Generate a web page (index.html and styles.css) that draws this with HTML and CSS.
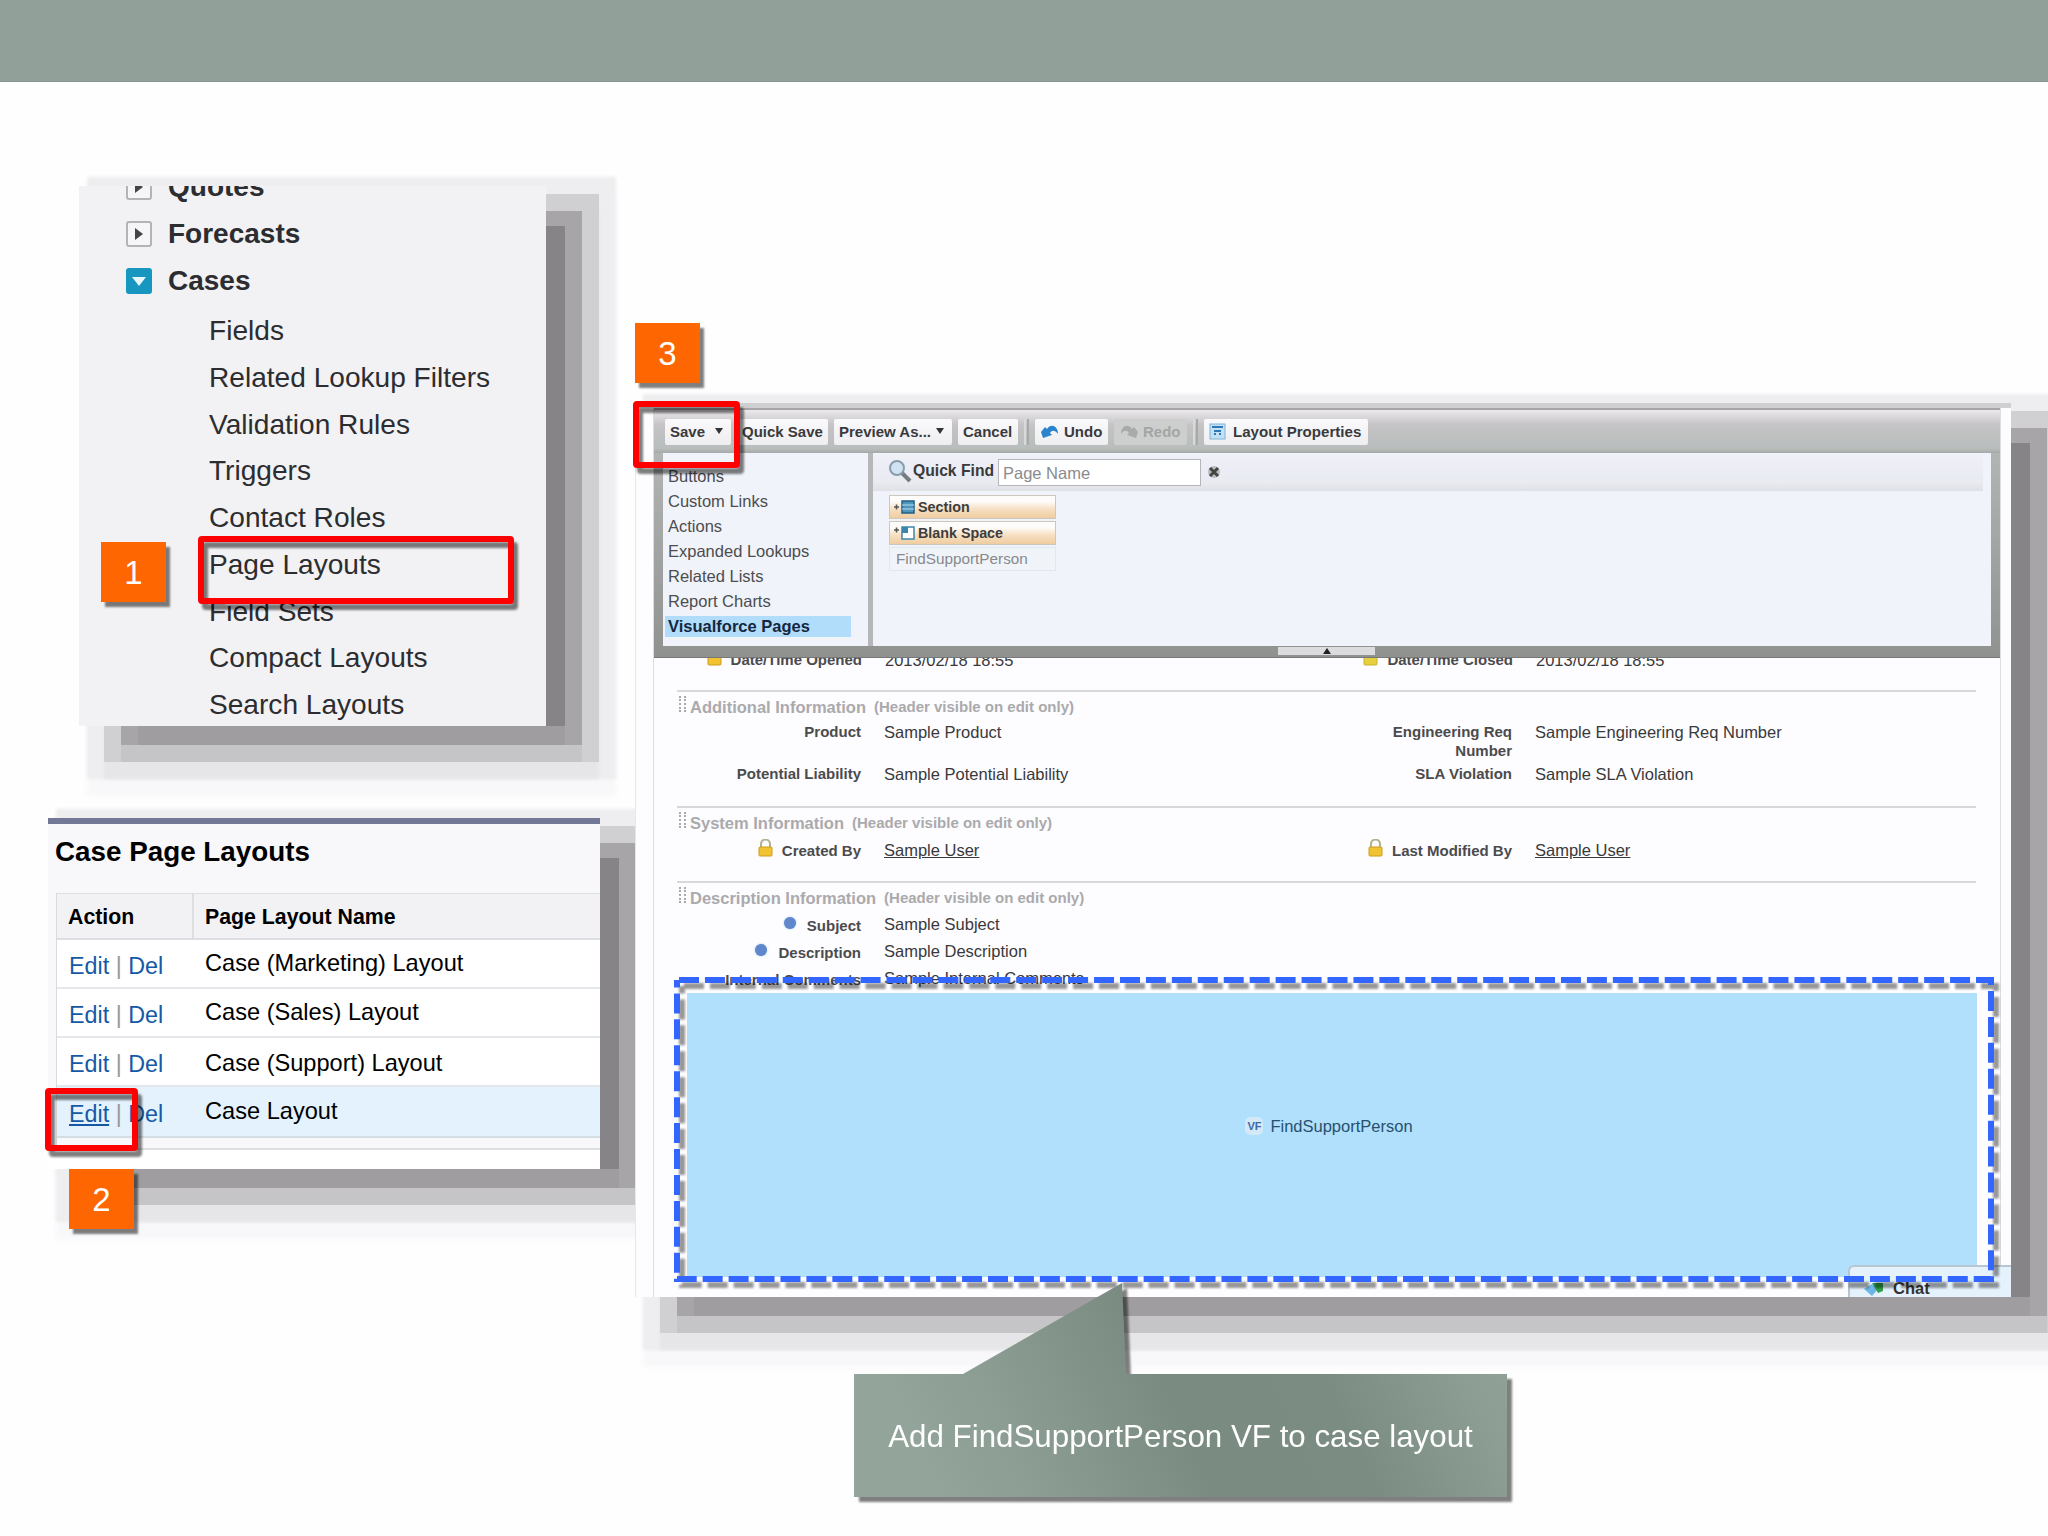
FILE: index.html
```html
<!DOCTYPE html>
<html lang="en">
<head>
    <meta charset="UTF-8">
    <meta name="viewport" content="width=device-width, initial-scale=1.0">
    <title>Case Layout Setup</title>
    <link rel="stylesheet" href="styles.css">
</head>
<body>
    <div class="slide">
        <div class="topbar"></div>
        <div class="board">
            <div class="left">
                <div class="panel tree">
                    <div class="tree-list">
                        <div class="node"><svg class="toggle" viewBox="0 0 26 26"><rect x="1" y="1" width="24" height="24" rx="2" fill="#f6f5f7" stroke="#b4b3b5" stroke-width="2"/><path d="M9 7v12l8-6z" fill="#444"/></svg>Quotes</div>
                        <div class="node"><svg class="toggle" viewBox="0 0 26 26"><rect x="1" y="1" width="24" height="24" rx="2" fill="#f6f5f7" stroke="#b4b3b5" stroke-width="2"/><path d="M9 7v12l8-6z" fill="#444"/></svg>Forecasts</div>
                        <div class="node"><svg class="toggle" viewBox="0 0 26 26"><rect width="26" height="26" rx="3" fill="#1797c0"/><path d="M6 9h14l-7 9z" fill="#e6f8fd"/></svg>Cases</div>
                        <div class="leaves">
                            <div class="leaf">Fields</div>
                            <div class="leaf">Related Lookup Filters</div>
                            <div class="leaf">Validation Rules</div>
                            <div class="leaf">Triggers</div>
                            <div class="leaf">Contact Roles</div>
                            <div class="leaf">Page Layouts</div>
                            <div class="leaf">Field Sets</div>
                            <div class="leaf">Compact Layouts</div>
                            <div class="leaf">Search Layouts</div>
                        </div>
                    </div>
                </div>
                <div class="panel layouts">
                    <div class="layouts-title">Case Page Layouts</div>
                    <div class="table">
                        <div class="row head"><div class="action">Action</div><div class="name">Page Layout Name</div></div>
                        <div class="row"><div class="action"><a>Edit</a> | <a>Del</a></div><div class="name">Case (Marketing) Layout</div></div>
                        <div class="row"><div class="action"><a>Edit</a> | <a>Del</a></div><div class="name">Case (Sales) Layout</div></div>
                        <div class="row third"><div class="action"><a>Edit</a> | <a>Del</a></div><div class="name">Case (Support) Layout</div></div>
                        <div class="row active"><div class="action"><a class="hover">Edit</a> | <a>Del</a></div><div class="name">Case Layout</div></div>
                        <div class="foot"></div>
                    </div>
                </div>
            </div>
            <div class="panel editor">
                <div class="page">
                    <div class="palette">
                        <div class="toolbar">
                            <div class="btn save">Save <i class="caret"></i></div>
                            <div class="btn quick">Quick Save</div>
                            <div class="btn preview">Preview As... <i class="caret"></i></div>
                            <div class="btn cancel">Cancel</div>
                            <div class="sep"></div>
                            <div class="btn undo"><svg width="20" height="16" viewBox="0 0 20 16"><path d="M1 9l4-5 2 2c4-6 11-3 11 5-3-4-6-4-8-1l2 2-9 3z" fill="#2c83cd"/></svg>Undo</div>
                            <div class="btn redo"><svg width="20" height="16" viewBox="0 0 20 16"><path d="M19 9l-4-5-2 2C9 0 2 3 2 11c3-4 6-4 8-1l-2 2 9 3z" fill="#a9abab"/></svg>Redo</div>
                            <div class="sep"></div>
                            <div class="btn props"><svg width="17" height="17" viewBox="0 0 17 17"><rect x="1" y="1" width="15" height="15" fill="#c3e1f6" stroke="#7fb2d8"/><path d="M3 4h11M5 8h7M5 11h2M10 11h2" stroke="#2f78b5" stroke-width="2"/></svg>Layout Properties</div>
                        </div>
                        <div class="palette-body">
                            <div class="categories">
                                <div>Buttons</div>
                                <div>Custom Links</div>
                                <div>Actions</div>
                                <div>Expanded Lookups</div>
                                <div>Related Lists</div>
                                <div>Report Charts</div>
                                <div class="selected">Visualforce Pages</div>
                            </div>
                            <div class="items">
                                <div class="find">
                                    <svg width="25" height="25" viewBox="0 0 25 25"><path d="M14 14l8 8" stroke="#777b82" stroke-width="4"/><circle cx="9" cy="9" r="7" fill="#cfe3f3" stroke="#8b9bab" stroke-width="2"/></svg>
                                    <span class="find-label">Quick Find</span>
                                    <div class="find-input">Page Name</div>
                                    <svg class="clear" width="14" height="14" viewBox="0 0 14 14"><circle cx="7" cy="7" r="6" fill="#bbb"/><path d="M3 3l8 8M11 3l-8 8" stroke="#444" stroke-width="3"/></svg>
                                </div>
                                <div class="item"><svg width="22" height="16" viewBox="0 0 22 16"><path d="M0 8h5M2.500 5.500v5" stroke="#555" stroke-width="1.500"/><rect x="8" y="2" width="12" height="12" fill="#4f96bd" stroke="#1f5f86" stroke-width="1.500"/><path d="M8 6h12M8 10h12" stroke="#b5dcee"/></svg>Section</div>
                                <div class="item"><svg width="22" height="16" viewBox="0 0 22 16"><path d="M0 5h5M2.500 2.500v5" stroke="#555" stroke-width="1.500"/><rect x="8" y="2" width="12" height="12" fill="#fff" stroke="#3b86ad" stroke-width="1.500"/><path d="M8 2h6v6H8z" fill="#3b86ad"/></svg>Blank Space</div>
                                <div class="item used">FindSupportPerson</div>
                            </div>
                        </div>
                        <div class="handle"><svg width="8" height="6" viewBox="0 0 8 6"><path d="M4 0l4 6H0z" fill="#222"/></svg></div>
                    </div>

                    <div class="fields first">
                        <div class="label"><svg class="lock" viewBox="0 0 15 18"><path d="M3 9V5a4 4 0 0 1 9 0v4" fill="none" stroke="#b5b08f" stroke-width="2"/><rect x="1" y="8" width="13" height="9" rx="1" fill="#f1c232" stroke="#cf9b1d"/></svg>Date/Time Opened</div>
                        <div class="value">2013/02/18 18:55</div>
                        <div class="label"><svg class="lock" viewBox="0 0 15 18"><path d="M3 9V5a4 4 0 0 1 9 0v4" fill="none" stroke="#b5b08f" stroke-width="2"/><rect x="1" y="8" width="13" height="9" rx="1" fill="#e6d040" stroke="#c9b32a"/></svg>Date/Time Closed</div>
                        <div class="value">2013/02/18 18:55</div>
                    </div>
                    <div class="section additional">
                        <div class="section-head"><i class="grip"></i>Additional Information <span>(Header visible on edit only)</span></div>
                        <div class="fields">
                            <div class="label">Product</div>
                            <div class="value">Sample Product</div>
                            <div class="label">Engineering Req<br>Number</div>
                            <div class="value">Sample Engineering Req Number</div>
                        </div>
                        <div class="fields">
                            <div class="label">Potential Liability</div>
                            <div class="value">Sample Potential Liability</div>
                            <div class="label">SLA Violation</div>
                            <div class="value">Sample SLA Violation</div>
                        </div>
                    </div>
                    <div class="section system">
                        <div class="section-head"><i class="grip"></i>System Information <span>(Header visible on edit only)</span></div>
                        <div class="fields">
                            <div class="label"><svg class="lock" viewBox="0 0 15 18"><path d="M3 9V5a4 4 0 0 1 9 0v4" fill="none" stroke="#b5b08f" stroke-width="2"/><rect x="1" y="8" width="13" height="9" rx="1" fill="#f1c232" stroke="#cf9b1d"/></svg>Created By</div>
                            <div class="value"><u>Sample User</u></div>
                            <div class="label"><svg class="lock" viewBox="0 0 15 18"><path d="M3 9V5a4 4 0 0 1 9 0v4" fill="none" stroke="#b5b08f" stroke-width="2"/><rect x="1" y="8" width="13" height="9" rx="1" fill="#f1c232" stroke="#cf9b1d"/></svg>Last Modified By</div>
                            <div class="value"><u>Sample User</u></div>
                        </div>
                    </div>
                    <div class="section description">
                        <div class="section-head"><i class="grip"></i>Description Information <span>(Header visible on edit only)</span></div>
                        <div class="fields"><div class="label"><i class="dot"></i>Subject</div><div class="value">Sample Subject</div></div>
                        <div class="fields"><div class="label"><i class="dot"></i>Description</div><div class="value">Sample Description</div></div>
                        <div class="fields"><div class="label">Internal Comments</div><div class="value">Sample Internal Comments</div></div>
                    </div>
                    <div class="vf"><span class="vf-icon">VF</span>FindSupportPerson</div>
                </div>
                <div class="chat"><svg width="20" height="17" viewBox="0 0 20 17"><path d="M0 9l8-5 6 5-6 7z" fill="#6db5e6"/><path d="M8 3h11v8l-5 2z" fill="#2fa04c"/></svg>Chat</div>
            </div>
        </div>

        <!-- step markers -->
        <div class="mark mark-1"></div>
        <div class="mark mark-2"></div>
        <div class="mark mark-3"></div>
        <div class="badge badge-1">1</div>
        <div class="badge badge-2">2</div>
        <div class="badge badge-3">3</div>
        <svg class="dashed" width="1330" height="320" viewBox="0 0 1330 320">
            <path d="M9 7H1321V306H7V7" fill="none" stroke="#3366fe" stroke-width="6" stroke-dasharray="20 5.940"/>
        </svg>
        <div class="callout">
            <svg width="653" height="214" viewBox="0 0 653 214">
                <defs>
                    <linearGradient id="sage" x1="0" y1="0.150" x2="1" y2="0">
                        <stop offset="0" stop-color="#93a49a"/>
                        <stop offset="0.150" stop-color="#8c9d93"/>
                        <stop offset="0.420" stop-color="#7a8b81"/>
                        <stop offset="0.660" stop-color="#7b8c82"/>
                        <stop offset="0.870" stop-color="#8c9d93"/>
                        <stop offset="1" stop-color="#93a49a"/>
                    </linearGradient>
                </defs>
                <path d="M0 91H109L268 0L272 91H653V214H0Z" fill="url(#sage)"/>
            </svg>
            <div class="callout-text">Add FindSupportPerson VF to case layout</div>
        </div>
    </div>
</body>
</html>
```

FILE: styles.css
```css
* {
    box-sizing: border-box;
}
body {
    margin: 0;
    font-family: "Liberation Sans", Arial, sans-serif;
    background-color: #fefefe;
}
.slide {
    position: relative;
    width: 2048px;
    height: 1536px;
    overflow: hidden;
}
.topbar {
    height: 82px;
    background-color: #91a199;
    border-bottom: 1px solid #87978e;
}
.board {
    display: flex;
    align-items: flex-start;
}
.left {
    width: 635px;
    flex-shrink: 0;
}

/* stepped shadow, darkest layer first */
.panel {
    box-shadow:
        39px 20px 0 -20px #868486,
        39px 39px 0 -20px #9f9d9f,
        39px 22px 0 -3px #a7a5a7,
        39px 39px 0 -3px #c5c4c6,
        39px 22px 0 14px #d0cfd1,
        39px 39px 3px 14px #e6e5e7,
        39px 22px 3px 31px #eeedef,
        39px 39px 6px 31px #f8f7f9;
}

/* setup tree */
.tree {
    width: 467px;
    height: 540px;
    margin: 104px 0 0 79px;
    background-color: #f2f1f3;
    overflow: hidden;
    font-size: 28.1px;
    color: #2b2d30;
}
.tree-list {
    margin-top: -23px;
    padding-left: 47px;
}
.node {
    display: flex;
    align-items: center;
    gap: 16px;
    height: 47px;
    font-size: 28px;
    font-weight: bold;
}
.toggle {
    width: 26px;
    height: 26px;
}
.leaves {
    padding: 4px 0 0 83px;
}
.leaf {
    line-height: 46.75px;
}

/* page layouts table */
.layouts {
    width: 552px;
    height: 351px;
    margin: 92px 0 0 48px;
    border-top: 6px solid #747897;
    background-color: #fff;
}
.layouts-title {
    height: 69px;
    padding: 12px 0 0 7px;
    background-color: #f8f7fa;
    font-size: 27.8px;
    font-weight: bold;
    line-height: 32px;
}
.table {
    padding-left: 9px;
    background: linear-gradient(90deg, #f8f7fa 8px, #d9dadd 8px, #d9dadd 9px, transparent 9px);
}
.row {
    display: flex;
    height: 49px;
    background-color: #fff;
    border-bottom: 2px solid #e6e7ea;
    font-size: 23.6px;
    line-height: 47px;
}
.row .action {
    width: 137px;
    padding: 3px 0 0 12px;
    font-size: 23.3px;
    color: #999;
}
.row .name {
    padding-left: 11px;
}
.row a {
    color: #1459a6;
}
.row a.hover {
    text-decoration: underline;
}
.row.head {
    height: 47px;
    background-color: #f2f2f4;
    border-top: 1px solid #dcdde0;
    border-color: #dddee1;
    font-size: 21.3px;
    font-weight: bold;
}
.row.head .action {
    padding-top: 0;
    padding-left: 11px;
    border-right: 2px solid #dddee1;
    font-size: 21.3px;
    color: #000;
}
.row.third .name {
    padding-top: 2px;
}
.row.active {
    height: 51px;
    background-color: #e3f2fd;
    border-color: #d4dde4;
    padding-top: 1px;
}
.foot {
    height: 12px;
    background-color: #f8f8fb;
    border-bottom: 2px solid #dddee1;
}

/* layout editor */
.editor {
    position: relative;
    width: 1376px;
    height: 894px;
    margin-top: 321px;
    padding-left: 18px;
    flex-shrink: 0;
    background-color: #fdfcfe;
    border-left: 1px solid #e7e6e8;
    border-top: 5px solid #cfced0;
}
.page {
    width: 1348px;
    height: 889px;
    margin-left: -1px;
    border-left: 1px solid #dddce0;
    border-right: 1px solid #dddce0;
    overflow: hidden;
}
.palette {
    position: relative;
    width: 1348px;
    height: 250px;
    margin-left: -1px;
    padding: 0 10px;
    background: linear-gradient(#b9bcbb, #909290);
    border-top: 2px solid #a6a5a7;
    border-bottom: 1px solid #777;
}
.toolbar {
    display: flex;
    align-items: flex-start;
    height: 43px;
    margin: 0 -10px;
    padding: 9px 0 0 12px;
    background: linear-gradient(#ebe9eb, #c5c3c5 35%, #b8bdbc 90%, #a5a8a7);
}
.btn {
    display: flex;
    align-items: center;
    height: 26px;
    padding: 0 0 2px 5px;
    margin-right: 6px;
    border-radius: 2px;
    background: linear-gradient(#fafafc, #eeeef1);
    font-size: 15px;
    font-weight: bold;
    color: #3a3a3c;
    white-space: nowrap;
}
.caret {
    margin-left: 10px;
    border: 4px solid transparent;
    border-top: 6px solid #333;
    border-bottom: none;
}
.preview .caret {
    margin-left: 5px;
}
.save { width: 66px; }
.quick { width: 91px; }
.preview { width: 118px; }
.cancel { width: 60px; }
.undo { width: 73px; gap: 4px; }
.redo { width: 73px; gap: 4px; background: #cdcfcf; color: #a3a5a5; }
.props { width: 164px; gap: 7px; font-size: 15.1px; }
.sep {
    width: 5px;
    height: 26px;
    margin-right: 6px;
    border-left: 2px solid #d8dada;
    border-right: 2px solid #a5a9a8;
}
.palette-body {
    display: flex;
    height: 193px;
    background-color: #f0f3f9;
}
.categories {
    width: 210px;
    padding: 11px 0 0 2px;
    border-right: 5px solid #b5b7ba;
    font-size: 16.5px;
    line-height: 25px;
    color: #4c4d50;
}
.categories div {
    padding-left: 3px;
    height: 25px;
    width: 186px;
}
.categories .selected {
    height: 21px;
    margin-top: 2px;
    line-height: 20px;
    background-color: #b1dcfa;
    font-weight: bold;
    color: #14273f;
}
.items {
    flex: 1;
    padding: 2px 8px 0 0;
}
.find {
    display: flex;
    height: 36px;
    padding: 4px 0 0 15px;
    background: linear-gradient(#f0f1f7, #ebecf5 40%, #e9ebf1 75%, #dfe1e6);
}
.find-label {
    width: 85px;
    font-size: 15.7px;
    font-weight: bold;
    line-height: 24px;
    color: #3a3a3c;
}
.find-input {
    width: 203px;
    height: 27px;
    padding-left: 4px;
    border: 1px solid #b4b6ba;
    background-color: #fff;
    font-size: 16.5px;
    line-height: 26px;
    color: #8a8b8e;
}
.clear {
    margin: 6px 0 0 6px;
}
.item {
    display: flex;
    align-items: center;
    gap: 2px;
    width: 167px;
    height: 24px;
    margin: 4px 0 0 16px;
    padding: 0 0 1px 4px;
    border: 1px solid #cfc6be;
    background: linear-gradient(#fefcfa 25%, #f6dfc2 60%, #efcda0);
    font-size: 14.3px;
    font-weight: bold;
    color: #3d3d3d;
}
.item + .item {
    margin-top: 2px;
}
.item.used {
    padding-left: 6px;
    border-color: #dfe8ec;
    background: #f0f4f9;
    font-size: 15.3px;
    font-weight: normal;
    color: #87898d;
}
.handle {
    display: flex;
    justify-content: center;
    align-items: center;
    width: 97px;
    height: 8px;
    margin: 1px 0 0 615px;
    background-color: #dcdcde;
}

.fields {
    display: grid;
    grid-template-columns: 208px 443px 208px 1fr;
    height: 27px;
    line-height: 19px;
}
.label {
    display: flex;
    justify-content: flex-end;
    align-items: flex-start;
    font-size: 15px;
    font-weight: bold;
    text-align: right;
    color: #4b4b4d;
}
.value {
    padding: 1px 0 0 23px;
    font-size: 16.5px;
    color: #39393b;
}
.lock {
    width: 15px;
    height: 18px;
    margin-right: 9px;
    margin-top: -2px;
}
.dot {
    width: 12px;
    height: 12px;
    margin: 1px 11px 0 0;
    border-radius: 50%;
    background-color: #6087cc;
    box-shadow: 0 0 2px #8cc4f0;
}
.fields.first {
    height: 40px;
    margin-top: -8px;
}
.section {
    width: 1299px;
    margin-left: 23px;
    border-top: 2px solid #d8d7da;
}
.section .fields {
    margin-left: -24px;
}
.section-head {
    display: flex;
    font-size: 16.5px;
    font-weight: bold;
    line-height: 18px;
    color: #aaaaad;
}
.section-head span {
    margin-left: 8px;
    font-size: 15px;
}
.grip {
    width: 7px;
    height: 16px;
    margin: -2px 4px 0 2px;
    border-left: 2px dotted #aaa;
    border-right: 2px dotted #aaa;
}
.additional {
    height: 116px;
    padding-top: 6px;
}
.additional .section-head {
    margin-bottom: 6px;
}
.additional .fields {
    height: 42px;
}
.system {
    height: 75px;
    padding-top: 6px;
}
.system .section-head, .description .section-head {
    margin-bottom: 9px;
}
.system .value {
    padding-top: 0;
}
.description {
    height: 112px;
    padding-top: 6px;
}
.description .value {
    padding-top: 0;
    margin-top: -1px;
}
.vf {
    display: flex;
    justify-content: center;
    align-items: center;
    width: 1290px;
    height: 284px;
    margin-left: 33px;
    padding: 0 6px 18px 0;
    background-color: #b0e0fc;
    font-size: 16.5px;
    color: #27506f;
}
.vf-icon {
    width: 18px;
    height: 18px;
    margin-right: 7px;
    border-radius: 5px;
    background-color: #d4e9f8;
    font-size: 11px;
    font-weight: bold;
    line-height: 19px;
    text-align: center;
    color: #3d69a5;
}
.chat {
    position: absolute;
    right: 0;
    bottom: 0;
    display: flex;
    align-items: center;
    gap: 9px;
    width: 163px;
    height: 32px;
    padding: 12px 0 0 14px;
    border-top: 2px solid #b8c5d2;
    border-left: 2px solid #b8c5d2;
    border-radius: 6px 0 0 0;
    background-color: #e5f2fc;
    font-size: 16.5px;
    font-weight: bold;
    color: #333;
}

/* annotations over the panels */
.mark {
    position: absolute;
    z-index: 2;
    border: 6px solid #fe0000;
    border-radius: 4px;
    filter: drop-shadow(4px 6px 1px rgba(0, 0, 0, 0.5));
}
.mark-1 {
    left: 198px;
    top: 536px;
    width: 316px;
    height: 68px;
}
.mark-2 {
    left: 45px;
    top: 1088px;
    width: 93px;
    height: 63px;
}
.mark-3 {
    left: 633px;
    top: 401px;
    width: 107px;
    height: 67px;
}
.badge {
    position: absolute;
    z-index: 2;
    width: 65px;
    height: 60px;
    background-color: #fe6601;
    box-shadow: 4px 5px 2px rgba(0, 0, 0, 0.5);
    font-size: 33px;
    line-height: 61px;
    text-align: center;
    color: #fff;
}
.badge-1 {
    left: 101px;
    top: 542px;
}
.badge-2 {
    left: 69px;
    top: 1169px;
}
.badge-3 {
    left: 635px;
    top: 323px;
}
.dashed {
    position: absolute;
    left: 670px;
    top: 973px;
    filter: drop-shadow(5px 6px 1px rgba(0, 0, 0, 0.4));
}
.callout {
    position: absolute;
    left: 854px;
    top: 1283px;
    width: 653px;
    height: 214px;
    filter: drop-shadow(5px 5px 1px rgba(0, 0, 0, 0.5));
}
.callout svg {
    display: block;
}
.callout-text {
    position: absolute;
    left: 0;
    top: 92px;
    width: 653px;
    line-height: 124px;
    font-size: 31.3px;
    text-align: center;
    color: #fff;
}
```
